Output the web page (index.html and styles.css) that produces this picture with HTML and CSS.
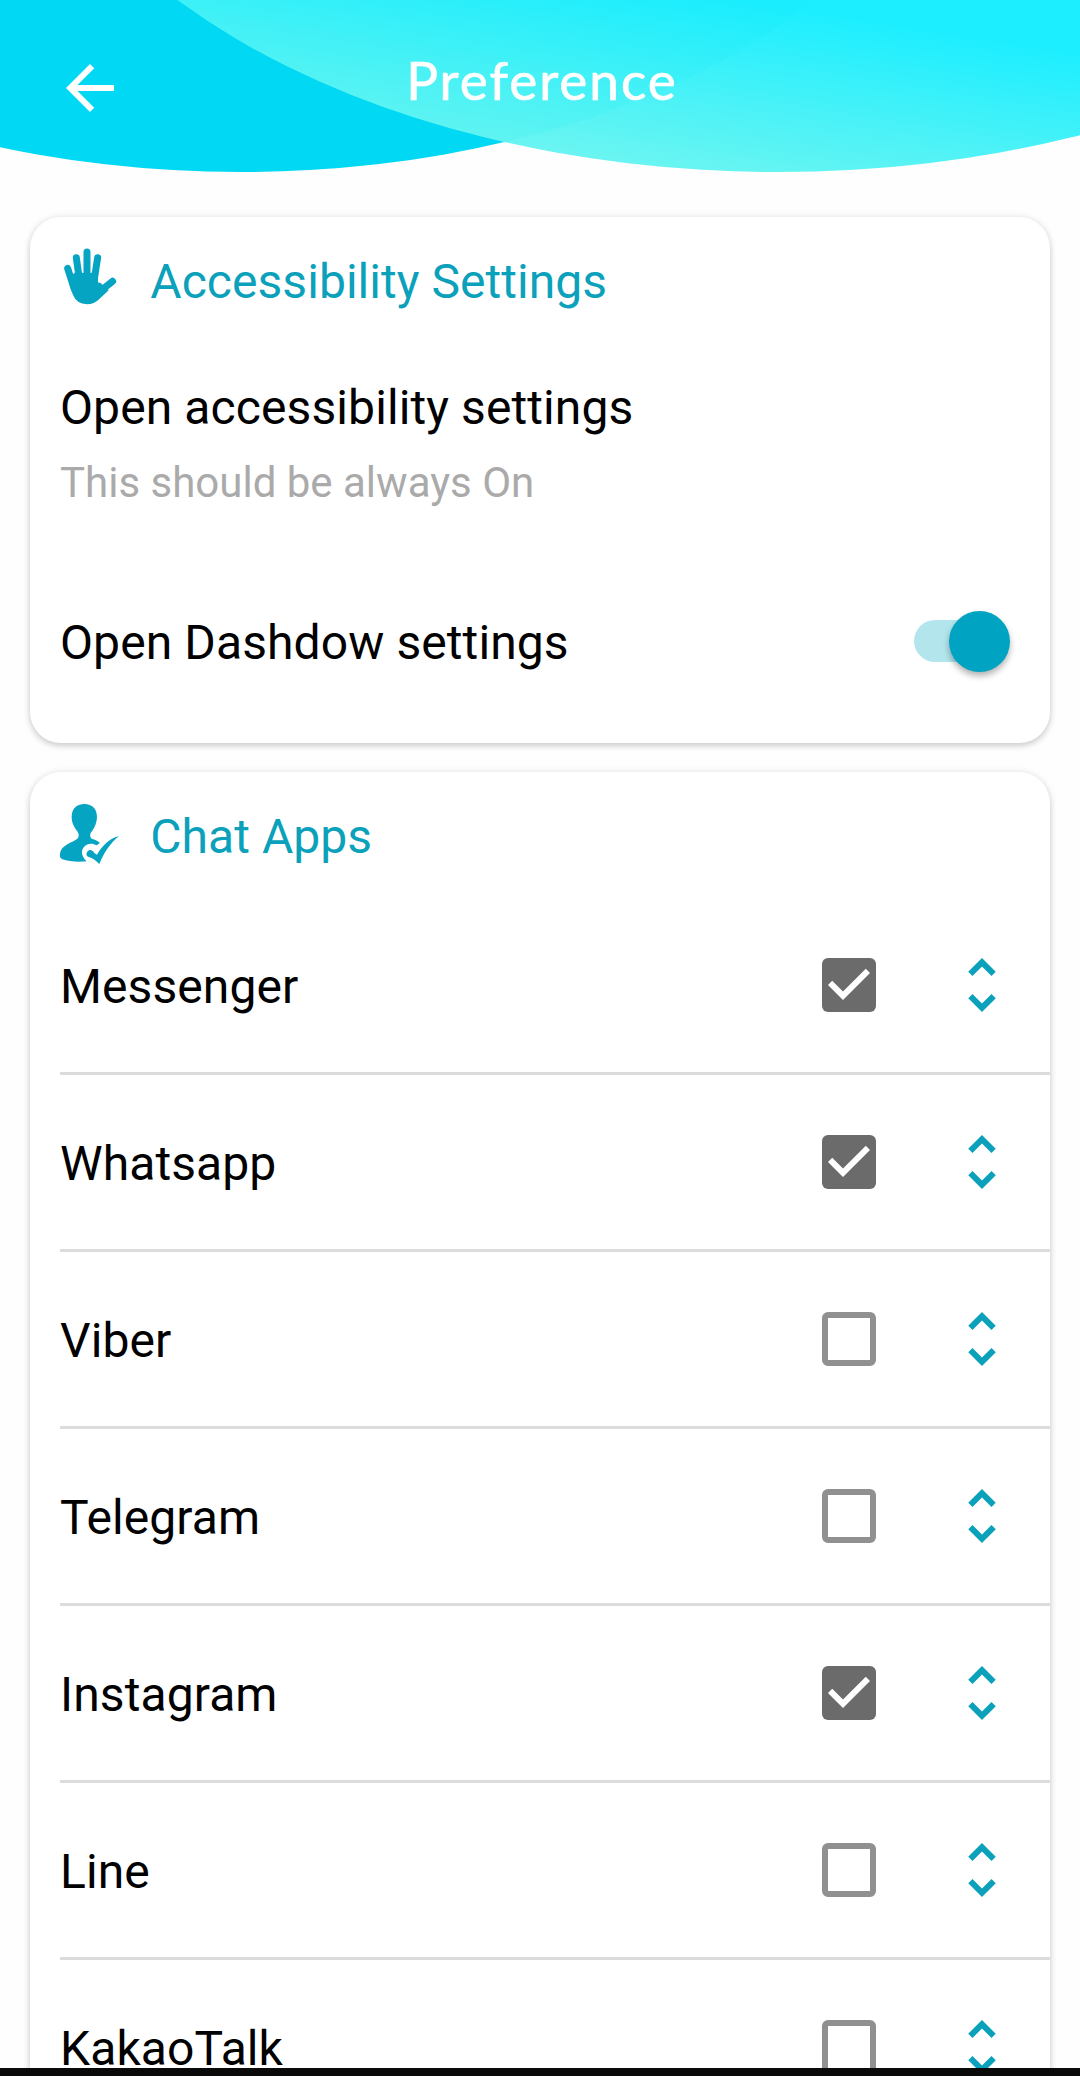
FILE: index.html
```html
<!DOCTYPE html>
<html lang="en">
<head>
<meta charset="utf-8">
<title>Preference</title>
<link rel="stylesheet" href="styles.css">
</head>
<body>
<svg class="defs" aria-hidden="true">
  <symbol id="sort" viewBox="0 0 24 24"><path d="M12 5.83L15.17 9l1.41-1.41L12 3 7.41 7.59 8.83 9 12 5.83zm0 12.34L8.83 15l-1.41 1.41L12 21l4.59-4.59L15.17 15 12 18.17z"/></symbol>
  <symbol id="tick" viewBox="3 3 18 18"><path d="M10 17l-5-5 1.41-1.41L10 14.17l7.59-7.59L19 8z"/></symbol>
</svg>
<div class="screen">
  <header class="header">
    <svg class="waves" viewBox="0 0 1080 180" aria-hidden="true">
      <defs>
        <linearGradient id="wave" gradientUnits="userSpaceOnUse" x1="747" y1="0" x2="718" y2="184">
          <stop offset="0" stop-color="#1ceeff"/>
          <stop offset="1" stop-color="#6df5f1"/>
        </linearGradient>
        <clipPath id="rightWave"><ellipse cx="778" cy="-288" rx="770" ry="460"/></clipPath>
      </defs>
      <ellipse cx="241" cy="-231" rx="697" ry="403" fill="#00d8f4"/>
      <g clip-path="url(#rightWave)">
        <rect width="1080" height="180" fill="url(#wave)"/>
        <ellipse cx="241" cy="-231" rx="697" ry="403" fill="#00e8f4" opacity=".09"/>
      </g>
    </svg>
    <svg class="back" viewBox="0 0 24 24"><path d="M20 11H7.83l5.59-5.59L12 4l-8 8 8 8 1.41-1.41L7.83 13H20v-2z"/></svg>
    <h1 class="title">Preference</h1>
  </header>

  <main class="cards">
    <section class="card card-access">
      <div class="card-head">
        <svg class="head-icon" viewBox="111 140 190 190">
          <g class="fingers">
            <path d="M143 207L163 270M169 175L178 240M201 158V240M233 175L223 240M278 246L233 282"/>
          </g>
          <path d="M145 236L170 216Q200 228 234 216V247Q236 252 241 250L266 273L239 298Q222 315 201 315Q170 315 158 285Q150 264 145 236Z"/>
        </svg>
        <h2>Accessibility Settings</h2>
      </div>
      <div class="setting">
        <div class="label">Open accessibility settings</div>
        <div class="hint">This should be always On</div>
      </div>
      <div class="setting-row">
        <div class="label">Open Dashdow settings</div>
        <div class="switch"><span class="thumb"></span></div>
      </div>
    </section>

    <section class="card card-chat">
      <div class="card-head">
        <svg class="head-icon" viewBox="111 240 190 190">
          <path d="M193 249C217 249 231 264 231 287C231 310 219 327 212 336C209 346 211 352 220 355C229 358 236 362 240 366L230 373C217 365 202 367 192 378C182 389 184 406 200 421C177 424 145 422 127 415C117 411 119 397 123 388C131 371 157 364 171 354C178 348 177 339 173 332C162 318 155 306 155 287C155 264 169 249 193 249Z"/>
          <path d="M297 345C272 366 253 392 238 429C228 419 220 412 207 408C200 406 197 399 202 392C208 383 219 387 224 397L231 401C248 373 266 354 297 345Z"/>
        </svg>
        <h2>Chat Apps</h2>
      </div>
      <ul class="apps">
        <li class="app"><span class="label">Messenger</span><span class="box on"><svg><use href="#tick"/></svg></span><svg class="sort"><use href="#sort"/></svg></li>
        <li class="app"><span class="label">Whatsapp</span><span class="box on"><svg><use href="#tick"/></svg></span><svg class="sort"><use href="#sort"/></svg></li>
        <li class="app"><span class="label">Viber</span><span class="box"></span><svg class="sort"><use href="#sort"/></svg></li>
        <li class="app"><span class="label">Telegram</span><span class="box"></span><svg class="sort"><use href="#sort"/></svg></li>
        <li class="app"><span class="label">Instagram</span><span class="box on"><svg><use href="#tick"/></svg></span><svg class="sort"><use href="#sort"/></svg></li>
        <li class="app"><span class="label">Line</span><span class="box"></span><svg class="sort"><use href="#sort"/></svg></li>
        <li class="app"><span class="label">KakaoTalk</span><span class="box"></span><svg class="sort"><use href="#sort"/></svg></li>
      </ul>
    </section>
  </main>
  <div class="navbar"></div>
</div>
</body>
</html>
```
FILE: styles.css
```css
* { box-sizing: border-box; }

body {
  margin: 0;
  background: #fefefe;
  color: #000;
  font-family: Roboto, "Liberation Sans", sans-serif;
}

h1, h2 { margin: 0; font-weight: 400; }

.defs { display: none; }

.screen {
  display: flex;
  flex-direction: column;
  width: 1080px;
  height: 2076px;
  overflow: hidden;
}

.header {
  position: relative;
  flex: none;
  display: grid;
  grid-template-columns: 180px 1fr 180px;
  height: 217px;
}

.waves {
  position: absolute;
  inset: 0 0 auto;
  width: 1080px;
  height: 180px;
}

.back {
  position: relative;
  width: 72px;
  height: 72px;
  margin: 52px 0 0 54px;
  fill: #fff;
}

.title {
  position: relative;
  padding: 47px 0 0 4px;
  text-align: center;
  color: #fff;
  font: 400 53px/66px Lato, sans-serif;
  letter-spacing: 2px;
  -webkit-text-stroke: .7px #fff;
}

.cards {
  flex: 1;
  min-height: 0;
  display: flex;
  flex-direction: column;
  gap: 29px;
  margin-top: -20px;
  padding: 20px 30px 0;
  overflow: hidden;
}

.card {
  flex: none;
  border-radius: 31px;
  background: #fff;
  box-shadow: 0 3px 6px rgba(0, 0, 0, .16), 0 0 9px rgba(0, 0, 0, .08);
}

.card-access { height: 526px; }

.card-head {
  display: flex;
  align-items: flex-start;
  gap: 30px;
  height: 126px;
  padding: 29px 0 0 27px;
}

.card-head h2 {
  margin-top: 7px;
  font-size: 48px;
  line-height: 58px;
  letter-spacing: .05px;
  color: #0ba1bb;
}

.head-icon {
  width: 63.3px;
  height: 63.3px;
  fill: #06a4c3;
}

.fingers {
  fill: none;
  stroke: #06a4c3;
  stroke-width: 21;
  stroke-linecap: round;
}

.label {
  padding-top: 3px;
  font-size: 48px;
  line-height: 58px;
  letter-spacing: .1px;
}

.setting { padding: 33px 30px 0; height: 230px; }

.hint {
  margin-top: 21px;
  font-size: 42px;
  line-height: 50px;
  color: #aaa;
}

.setting-row {
  display: flex;
  align-items: center;
  justify-content: space-between;
  height: 136px;
  padding: 0 40px 0 30px;
}

.switch {
  display: flex;
  align-items: center;
  justify-content: flex-end;
  width: 96px;
  height: 42px;
  border-radius: 21px;
  background: linear-gradient(#b2e5ec, #b2e5ec) left / 80px 42px no-repeat;
}

.thumb {
  width: 61px;
  height: 61px;
  border-radius: 50%;
  background: #00a3c2;
  box-shadow: 0 4px 6px rgba(0, 0, 0, .3);
}

.apps {
  margin: 0;
  padding: 0 0 0 30px;
  list-style: none;
}

.app {
  display: grid;
  grid-template-columns: 1fr 54px 72px;
  column-gap: 70px;
  align-items: center;
  height: 177px;
  padding-right: 32px;
  border-bottom: 3px solid #dcdcdc;
}

.box {
  width: 54px;
  height: 54px;
  border: 6px solid #909090;
  border-radius: 6px;
}

.box.on {
  border: 0;
  background: #6b6b6b;
}

.box svg {
  display: block;
  width: 54px;
  height: 54px;
  fill: #fff;
}

.sort {
  width: 72px;
  height: 72px;
  fill: #0ba1bb;
}

.navbar {
  flex: none;
  height: 8px;
  background: #0a0a0a;
}
```
